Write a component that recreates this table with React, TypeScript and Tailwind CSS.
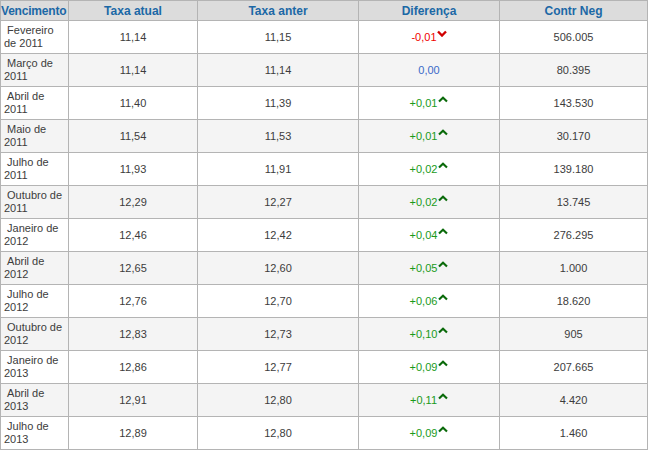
import React from "react"

type Row = { venc: [string, string]; atual: string; anter: string; dif: string; contr: string }

const rows: Row[] = [
  { venc: ["Fevereiro", "de 2011"], atual: "11,14", anter: "11,15", dif: "-0,01", contr: "506.005" },
  { venc: ["Março de", "2011"], atual: "11,14", anter: "11,14", dif: "0,00", contr: "80.395" },
  { venc: ["Abril de", "2011"], atual: "11,40", anter: "11,39", dif: "+0,01", contr: "143.530" },
  { venc: ["Maio de", "2011"], atual: "11,54", anter: "11,53", dif: "+0,01", contr: "30.170" },
  { venc: ["Julho de", "2011"], atual: "11,93", anter: "11,91", dif: "+0,02", contr: "139.180" },
  { venc: ["Outubro de", "2011"], atual: "12,29", anter: "12,27", dif: "+0,02", contr: "13.745" },
  { venc: ["Janeiro de", "2012"], atual: "12,46", anter: "12,42", dif: "+0,04", contr: "276.295" },
  { venc: ["Abril de", "2012"], atual: "12,65", anter: "12,60", dif: "+0,05", contr: "1.000" },
  { venc: ["Julho de", "2012"], atual: "12,76", anter: "12,70", dif: "+0,06", contr: "18.620" },
  { venc: ["Outubro de", "2012"], atual: "12,83", anter: "12,73", dif: "+0,10", contr: "905" },
  { venc: ["Janeiro de", "2013"], atual: "12,86", anter: "12,77", dif: "+0,09", contr: "207.665" },
  { venc: ["Abril de", "2013"], atual: "12,91", anter: "12,80", dif: "+0,11", contr: "4.420" },
  { venc: ["Julho de", "2013"], atual: "12,89", anter: "12,80", dif: "+0,09", contr: "1.460" },
]

function Diff({ value }: { value: string }) {
  if (value.startsWith("-")) {
    return (
      <span className="inline-flex items-start text-[#f00000]">
        {value}
        <svg width="10" height="7" viewBox="0 0 10 7" className="mt-[1px]">
          <path d="M1 1.5 L5 5.5 L9 1.5" fill="none" stroke="#d00000" strokeWidth="2.4" />
        </svg>
      </span>
    )
  }
  if (value.startsWith("+")) {
    return (
      <span className="inline-flex items-start text-[#1a9a1a]">
        {value}
        <svg width="10" height="7" viewBox="0 0 10 7" className="mt-[1px] ml-[1px]">
          <path d="M1 5.5 L5 1.8 L9 5.5" fill="none" stroke="#0a6a0a" strokeWidth="2.2" />
        </svg>
      </span>
    )
  }
  return <span className="text-[#3a6ac8]">{value}</span>
}

export default function App() {
  return (
    <div className="w-[648px] h-[450px] bg-white overflow-hidden font-['Liberation_Sans',Arial,sans-serif] text-[11px] text-[#3c3c3c]">
      <table className="border-collapse table-fixed w-[647px]">
        <colgroup>
          <col className="w-[68px]" />
          <col className="w-[129px]" />
          <col className="w-[161px]" />
          <col className="w-[141px]" />
          <col className="w-[148px]" />
        </colgroup>
        <thead>
          <tr className="h-[20px] bg-[#dcdcdc] text-[#1b68a6] font-bold text-[12px]">
            <th className="border border-[#b4b4b4] px-0 text-left whitespace-nowrap tracking-[-0.2px]">Vencimento</th>
            <th className="border border-[#b4b4b4]">Taxa atual</th>
            <th className="border border-[#b4b4b4]">Taxa anter</th>
            <th className="border border-[#b4b4b4]">Diferença</th>
            <th className="border border-[#b4b4b4]">Contr Neg</th>
          </tr>
        </thead>
        <tbody>
          {rows.map((r, i) => (
            <tr key={i} className={i % 2 === 1 ? "h-[33px] bg-[#f4f4f4]" : "h-[33px] bg-white"}>
              <td className="border border-[#b4b4b4] pl-[3px] leading-[13px] align-middle whitespace-nowrap">
                <div>&nbsp;{r.venc[0]}</div>
                <div>{r.venc[1]}</div>
              </td>
              <td className="border border-[#b4b4b4] text-center">{r.atual}</td>
              <td className="border border-[#b4b4b4] text-center">{r.anter}</td>
              <td className="border border-[#b4b4b4] text-center">
                <Diff value={r.dif} />
              </td>
              <td className="border border-[#b4b4b4] text-center">{r.contr}</td>
            </tr>
          ))}
        </tbody>
      </table>
    </div>
  )
}
